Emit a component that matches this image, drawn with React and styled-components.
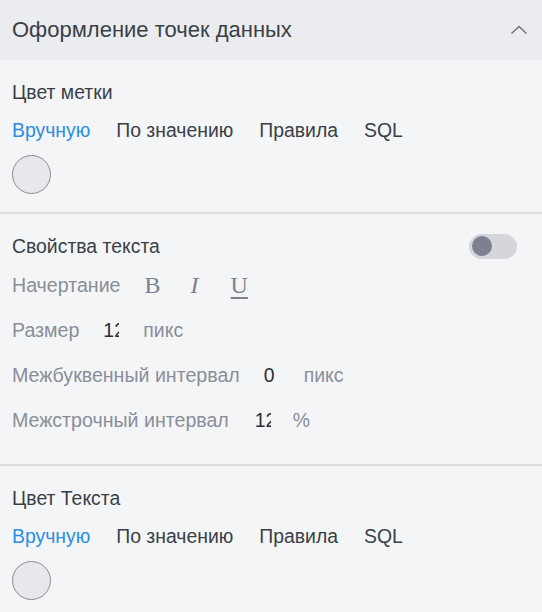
import React, { useState } from "react";
import styled, { createGlobalStyle } from "styled-components";

const Global = createGlobalStyle`
  html, body { margin: 0; padding: 0; background: #f4f5f7; }
  body { font-family: "Liberation Sans", Arial, sans-serif; }
`;

const Panel = styled.div`
  width: 542px;
  min-height: 612px;
  background: #f4f5f7;
  color: #3a3f47;
`;

const Header = styled.div`
  height: 60px;
  background: #ebecef;
  display: flex;
  align-items: center;
  justify-content: space-between;
  padding: 0 12px;
  box-sizing: border-box;
`;

const HeaderTitle = styled.div`
  font-size: 22px;
  color: #3a3f47;
`;

const Chevron = styled.svg`
  width: 18px;
  height: 12px;
  margin-right: 2px;
`;

const Section = styled.div`
  padding: ${(p) => p.$pad || "20px 12px 18px"};
  border-bottom: ${(p) => (p.$last ? "none" : "2px solid #dcdee2")};
`;

const SectionTitleRow = styled.div`
  display: flex;
  align-items: center;
  justify-content: space-between;
  height: 24px;
`;

const SectionTitle = styled.div`
  font-size: 19.4px;
  color: #3a3f47;
`;

const Tabs = styled.div`
  display: flex;
  gap: 26px;
  margin-top: 14px;
  height: 24px;
  align-items: center;
`;

const Tab = styled.span`
  font-size: 19.4px;
  color: ${(p) => (p.$active ? "#2b8de3" : "#3a3f47")};
  cursor: pointer;
`;

const Swatch = styled.div`
  width: 37px;
  height: 37px;
  border-radius: 50%;
  background: #e7e8ec;
  border: 1px solid #8a8d96;
  margin-top: 13px;
`;

const Toggle = styled.div`
  width: 48px;
  height: 25px;
  border-radius: 13px;
  background: #d4d6dc;
  display: flex;
  align-items: center;
  padding: 0 3px;
  box-sizing: border-box;
  margin-right: 13px;
`;

const Knob = styled.div`
  width: 20px;
  height: 20px;
  border-radius: 50%;
  background: #7c8091;
`;

const PropRow = styled.div`
  display: flex;
  align-items: center;
  height: 24px;
  margin-top: ${(p) => p.$mt || "21px"};
`;

const PropLabel = styled.span`
  font-size: 19.6px;
  color: #898e99;
`;

const StyleButtons = styled.div`
  display: flex;
  align-items: center;
  gap: 29px;
  margin-left: 24px;
`;

const StyleBtn = styled.span`
  font-family: "Liberation Serif", "DejaVu Serif", serif;
  font-size: 24px;
  line-height: 24px;
  color: #7c8091;
  font-style: ${(p) => (p.$italic ? "italic" : "normal")};
  text-decoration: ${(p) => (p.$underline ? "underline" : "none")};
  text-underline-offset: 4px;
  text-decoration-thickness: 1.5px;
  width: 14px;
  text-align: center;
`;

const NumInput = styled.input`
  width: 16px;
  margin-left: ${(p) => p.$ml || "24px"};
  border: none;
  background: transparent;
  padding: 0;
  font-family: "Liberation Sans", Arial, sans-serif;
  font-size: 19.4px;
  color: #2b2f36;
  outline: none;
`;

const Unit = styled.span`
  font-size: 19.4px;
  color: #898e99;
  margin-left: ${(p) => p.$ml || "24px"};
`;

const modes = ["Вручную", "По значению", "Правила", "SQL"];

function ColorSection({ title, last, pad }) {
  const [active, setActive] = useState(0);
  return (
    <Section $last={last} $pad={pad}>
      <SectionTitleRow>
        <SectionTitle>{title}</SectionTitle>
      </SectionTitleRow>
      <Tabs>
        {modes.map((m, i) => (
          <Tab key={m} $active={i === active} onClick={() => setActive(i)}>
            {m}
          </Tab>
        ))}
      </Tabs>
      <Swatch />
    </Section>
  );
}

export default function App() {
  return (
    <>
      <Global />
      <Panel>
        <Header>
          <HeaderTitle>Оформление точек данных</HeaderTitle>
          <Chevron viewBox="0 0 18 12">
            <path d="M1.5 9.5 L9 2.5 L16.5 9.5" fill="none" stroke="#6b6f78" strokeWidth="1.4" />
          </Chevron>
        </Header>
        <ColorSection title="Цвет метки" />
        <Section $pad="20px 12px 32px">
          <SectionTitleRow>
            <SectionTitle>Свойства текста</SectionTitle>
            <Toggle>
              <Knob />
            </Toggle>
          </SectionTitleRow>
          <PropRow $mt="15px">
            <PropLabel>Начертание</PropLabel>
            <StyleButtons>
              <StyleBtn>B</StyleBtn>
              <StyleBtn $italic>I</StyleBtn>
              <StyleBtn $underline>U</StyleBtn>
            </StyleButtons>
          </PropRow>
          <PropRow>
            <PropLabel>Размер</PropLabel>
            <NumInput defaultValue="12" />
            <Unit>пикс</Unit>
          </PropRow>
          <PropRow>
            <PropLabel>Межбуквенный интервал</PropLabel>
            <NumInput defaultValue="0" />
            <Unit>пикс</Unit>
          </PropRow>
          <PropRow>
            <PropLabel>Межстрочный интервал</PropLabel>
            <NumInput defaultValue="12" $ml="26px" />
            <Unit $ml="22px">%</Unit>
          </PropRow>
        </Section>
        <ColorSection title="Цвет Текста" last pad="20px 12px 14px" />
      </Panel>
    </>
  );
}
